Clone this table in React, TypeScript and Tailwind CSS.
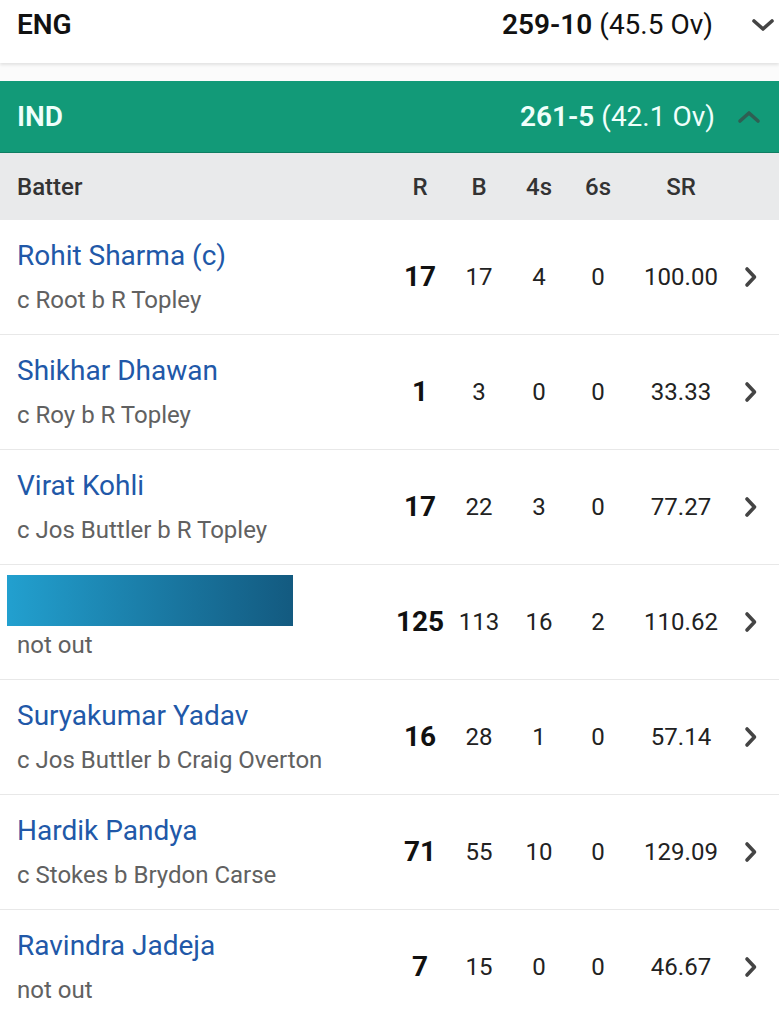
import React from "react";

type Row = {
  name?: string;
  bar?: boolean;
  how: string;
  r: string;
  b: string;
  f: string;
  s: string;
  sr: string;
};

const rows: Row[] = [
  { name: "Rohit Sharma (c)", how: "c Root b R Topley", r: "17", b: "17", f: "4", s: "0", sr: "100.00" },
  { name: "Shikhar Dhawan", how: "c Roy b R Topley", r: "1", b: "3", f: "0", s: "0", sr: "33.33" },
  { name: "Virat Kohli", how: "c Jos Buttler b R Topley", r: "17", b: "22", f: "3", s: "0", sr: "77.27" },
  { bar: true, how: "not out", r: "125", b: "113", f: "16", s: "2", sr: "110.62" },
  { name: "Suryakumar Yadav", how: "c Jos Buttler b Craig Overton", r: "16", b: "28", f: "1", s: "0", sr: "57.14" },
  { name: "Hardik Pandya", how: "c Stokes b Brydon Carse", r: "71", b: "55", f: "10", s: "0", sr: "129.09" },
  { name: "Ravindra Jadeja", how: "not out", r: "7", b: "15", f: "0", s: "0", sr: "46.67" },
];

function ChevronRight() {
  return (
    <svg width="14" height="22" viewBox="0 0 14 22" fill="none">
      <path d="M3 3 L10.5 11 L3 19" stroke="#444" strokeWidth="3.6" strokeLinecap="round" strokeLinejoin="round" />
    </svg>
  );
}

function ChevronV({ up, color }: { up?: boolean; color: string }) {
  return (
    <svg width="24" height="14" viewBox="0 0 24 14" fill="none">
      <path
        d={up ? "M3 11 L12 3 L21 11" : "M3 3 L12 11 L21 3"}
        stroke={color}
        strokeWidth="3.6"
        strokeLinecap="round"
        strokeLinejoin="round"
      />
    </svg>
  );
}

export default function App() {
  return (
    <div
      className="w-[779px] h-[1024px] overflow-hidden bg-white text-[#222]"
      style={{ fontFamily: "Roboto, 'Noto Sans', sans-serif" }}
    >
      {/* ENG row */}
      <div className="flex h-[63px] items-start pt-[8px] pl-[17px] pr-[4px] bg-white shadow-[0_2px_3px_rgba(0,0,0,0.10)] relative z-10">
        <div className="flex-1 text-[28px] leading-[34px] font-semibold text-[#111]">ENG</div>
        <div className="text-[28px] leading-[34px] text-[#111]">
          <span className="font-semibold">259-10</span> <span>(45.5 Ov)</span>
        </div>
        <div className="w-[62px] h-[34px] flex items-center justify-end">
          <ChevronV color="#444" />
        </div>
      </div>
      <div className="h-[18px] bg-[#fbfbfb]" />

      {/* IND bar */}
      <div className="flex h-[72px] items-center pl-[17px] pr-[18px] bg-[#129a78] border-b border-[#0f7e62]">
        <div className="flex-1 text-[28px] font-semibold text-[#effffb]">IND</div>
        <div className="text-[28px] text-[#effffb]">
          <span className="font-semibold">261-5</span> <span>(42.1 Ov)</span>
        </div>
        <div className="w-[46px] flex justify-end">
          <ChevronV up color="#2f5f53" />
        </div>
      </div>

      {/* Header */}
      <div className="flex h-[67px] items-center bg-[#e9eaeb] pl-[17px] pr-[17px] text-[24px] font-medium text-[#333]">
        <div className="flex-1">Batter</div>
        <div className="w-[60px] text-center">R</div>
        <div className="w-[58px] text-center">B</div>
        <div className="w-[62px] text-center">4s</div>
        <div className="w-[56px] text-center">6s</div>
        <div className="w-[110px] text-center">SR</div>
        <div className="w-[26px]" />
      </div>

      {/* Rows */}
      {rows.map((row, i) => (
        <div
          key={i}
          className="flex h-[115px] items-center border-b border-[#e8e8e8] pl-[17px] pr-[17px]"
        >
          <div className="flex-1 flex flex-col">
            {row.bar ? (
              <div className="ml-[-10px] h-[51px] w-[286px] bg-gradient-to-r from-[#22a0cf] to-[#135a80] mt-[-10px] mb-[4px]" />
            ) : (
              <div className="text-[28px] leading-[34px] text-[#2158a8]">{row.name}</div>
            )}
            <div className={"text-[24px] leading-[30px] text-[#616161] " + (row.bar ? "" : "mt-[12px]")}>
              {row.how}
            </div>
          </div>
          <div className="w-[60px] text-center text-[28px] font-bold text-[#111]">{row.r}</div>
          <div className="w-[58px] text-center text-[24px] text-[#222]">{row.b}</div>
          <div className="w-[62px] text-center text-[24px] text-[#222]">{row.f}</div>
          <div className="w-[56px] text-center text-[24px] text-[#222]">{row.s}</div>
          <div className="w-[110px] text-center text-[24px] text-[#222]">{row.sr}</div>
          <div className="w-[26px] flex justify-end pr-[4px]">
            <ChevronRight />
          </div>
        </div>
      ))}
    </div>
  );
}
